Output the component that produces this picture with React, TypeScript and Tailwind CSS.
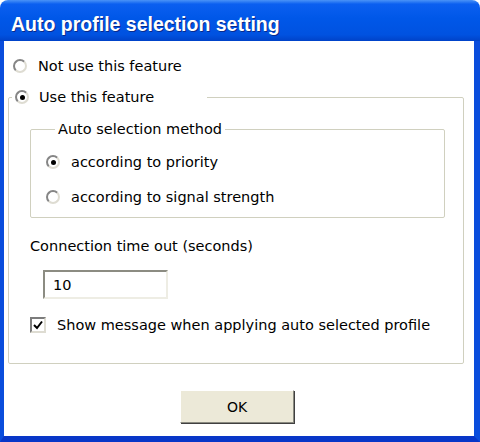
import React from "react";

function Radio({ checked }: { checked?: boolean }) {
  return (
    <span className="w-[14px] h-[14px] shrink-0 rounded-full border-2 border-t-[#858585] border-l-[#858585] border-r-[#dedcd2] border-b-[#dedcd2] bg-white flex items-center justify-center">
      {checked && <span className="w-[5px] h-[5px] rounded-full bg-black" />}
    </span>
  );
}

function Checkbox({ checked }: { checked?: boolean }) {
  return (
    <span className="w-[16px] h-[16px] shrink-0 border-2 border-t-[#7c7c7c] border-l-[#7c7c7c] border-r-[#dedcd2] border-b-[#dedcd2] bg-white flex items-center justify-center">
      {checked && (
        <svg width="10" height="10" viewBox="0 0 10 10">
          <path d="M1 5 L4 8 L9 1.5" stroke="#000" strokeWidth="2" fill="none" />
        </svg>
      )}
    </span>
  );
}

export default function App() {
  return (
    <div className="w-[480px] h-[442px] bg-white font-['DejaVu_Sans',sans-serif] text-[14.5px] text-black leading-[20px]">
      <div className="w-full h-full flex flex-col">
        {/* Title bar */}
        <div className="h-[41px] shrink-0 rounded-t-[8px] bg-[linear-gradient(180deg,#4a93f7_0%,#0b5ff0_10%,#0057e8_45%,#0052e0_85%,#0042c8_100%)] flex items-center pl-[11px] pt-[6px]">
          <span className="font-['Liberation_Sans',sans-serif] font-bold text-[19.5px] text-white [text-shadow:1px_1px_0_#0a2a8a]">
            Auto profile selection setting
          </span>
        </div>
        {/* Body */}
        <div className="flex-1 flex flex-col border-l-[4px] border-r-[6px] border-b-[6px] border-l-[#0a4ddc] border-r-[#0a4ddc] border-b-[#0836c8] bg-white pt-[15px] pl-[4px] pr-[10px]">
          <div className="flex items-center h-[20px] gap-[11px] pl-[5px]">
            <Radio />
            <span>Not use this feature</span>
          </div>

          <fieldset className="mt-[11px] border border-[#d0d0bf] rounded-[2px] pl-[21px] pr-[18px] pb-[28px]">
            <legend className="ml-[-18px] w-[195px] flex items-center gap-[10px] pl-[3px] h-[20px] bg-white">
              <Radio checked />
              <span>Use this feature</span>
            </legend>

            <fieldset className="mt-[13px] border border-[#d0d0bf] rounded-[2px] pl-[15px] pb-[10px]">
              <legend className="ml-[9px] px-[3px] h-[18px] leading-[18px]">Auto selection method</legend>
              <div className="flex items-center h-[20px] gap-[11px] mt-[14px]">
                <Radio checked />
                <span>according to priority</span>
              </div>
              <div className="flex items-center h-[20px] gap-[11px] mt-[15px]">
                <Radio />
                <span>according to signal strength</span>
              </div>
            </fieldset>

            <div className="h-[20px] mt-[18px] flex items-center">Connection time out (seconds)</div>
            <div className="mt-[14px] ml-[13px] w-[125px] h-[29px] border-2 border-t-[#8c8c82] border-l-[#8c8c82] border-r-[#eeede4] border-b-[#eeede4] bg-white flex items-center pl-[8px]">
              10
            </div>
            <div className="mt-[16px] flex items-center h-[20px] gap-[11px]">
              <Checkbox checked />
              <span>Show message when applying auto selected profile</span>
            </div>
          </fieldset>

          <div className="flex justify-center mt-[26px]">
            <div className="ml-[2px] w-[114px] h-[33px] bg-[#ece9d8] border border-t-white border-l-white border-r-[#8a8a80] border-b-[#8a8a80] shadow-[1px_1px_0_#404040] flex items-center justify-center text-[14px]">
              OK
            </div>
          </div>
        </div>
      </div>
    </div>
  );
}
